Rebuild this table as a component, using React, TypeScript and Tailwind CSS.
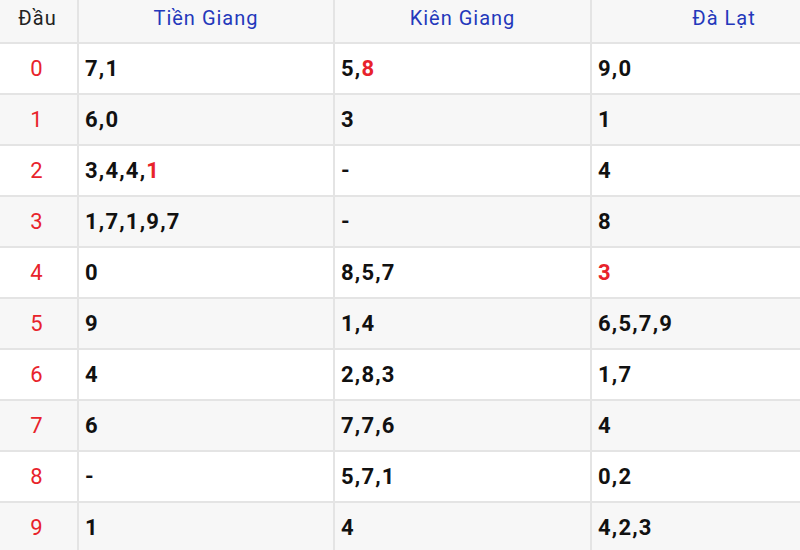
const provinces = ["Tiền Giang", "Kiên Giang", "Đà Lạt"];

// each cell: list of digits, the last one may be highlighted
type Cell = { nums: string[]; hot?: boolean } | null;

const rows: Cell[][] = [
  [{ nums: ["7", "1"] }, { nums: ["5", "8"], hot: true }, { nums: ["9", "0"] }],
  [{ nums: ["6", "0"] }, { nums: ["3"] }, { nums: ["1"] }],
  [{ nums: ["3", "4", "4", "1"], hot: true }, null, { nums: ["4"] }],
  [{ nums: ["1", "7", "1", "9", "7"] }, null, { nums: ["8"] }],
  [{ nums: ["0"] }, { nums: ["8", "5", "7"] }, { nums: ["3"], hot: true }],
  [{ nums: ["9"] }, { nums: ["1", "4"] }, { nums: ["6", "5", "7", "9"] }],
  [{ nums: ["4"] }, { nums: ["2", "8", "3"] }, { nums: ["1", "7"] }],
  [{ nums: ["6"] }, { nums: ["7", "7", "6"] }, { nums: ["4"] }],
  [null, { nums: ["5", "7", "1"] }, { nums: ["0", "2"] }],
  [{ nums: ["1"] }, { nums: ["4"] }, { nums: ["4", "2", "3"] }],
];

const colW = ["w-[256px]", "w-[257px]", "w-[264px]"];

const Value = ({ cell }: { cell: Cell }) => {
  if (!cell) return <span>-</span>;
  const head = cell.hot ? cell.nums.slice(0, -1) : cell.nums;
  const last = cell.hot ? cell.nums[cell.nums.length - 1] : null;
  return (
    <span>
      {head.join(",")}
      {last !== null && (
        <>
          {head.length > 0 && ","}
          <span className="text-[#e8232b]">{last}</span>
        </>
      )}
    </span>
  );
};

const App = () => {
  return (
    <div className="w-[800px] h-[550px] overflow-hidden bg-white font-['Roboto',sans-serif]">
      <div className="w-[860px]">
        {/* cabecera */}
        <div className="flex h-[43.5px] bg-[#f7f7f7] border-b-2 border-[#e4e4e4] text-[20px] tracking-[1px]">
          <div className="w-[79px] shrink-0 border-r-2 border-[#e4e4e4] flex items-center justify-center pr-[2px] pb-[5px] text-[#222]">
            Đầu
          </div>
          {provinces.map((p, i) => (
            <div
              key={p}
              className={`${colW[i]} shrink-0 ${i < 2 ? "border-r-2 border-[#e4e4e4]" : ""} flex items-center justify-center pb-[5px] text-[#2438bb]`}
            >
              {p}
            </div>
          ))}
        </div>

        {rows.map((r, idx) => (
          <div
            key={idx}
            className={`flex h-[51.1px] border-b-2 border-[#e4e4e4] text-[22px] tracking-[1.2px] ${idx % 2 ? "bg-[#f7f7f7]" : "bg-white"}`}
          >
            <div className="w-[79px] shrink-0 border-r-2 border-[#e4e4e4] flex items-center justify-center pr-[3px] text-[#e8232b]">
              {idx}
            </div>
            {r.map((c, i) => (
              <div
                key={i}
                className={`${colW[i]} shrink-0 ${i < 2 ? "border-r-2 border-[#e4e4e4]" : ""} flex items-center pl-[6px] font-bold text-[#111]`}
              >
                <Value cell={c} />
              </div>
            ))}
          </div>
        ))}
      </div>
    </div>
  );
};

export default App;
